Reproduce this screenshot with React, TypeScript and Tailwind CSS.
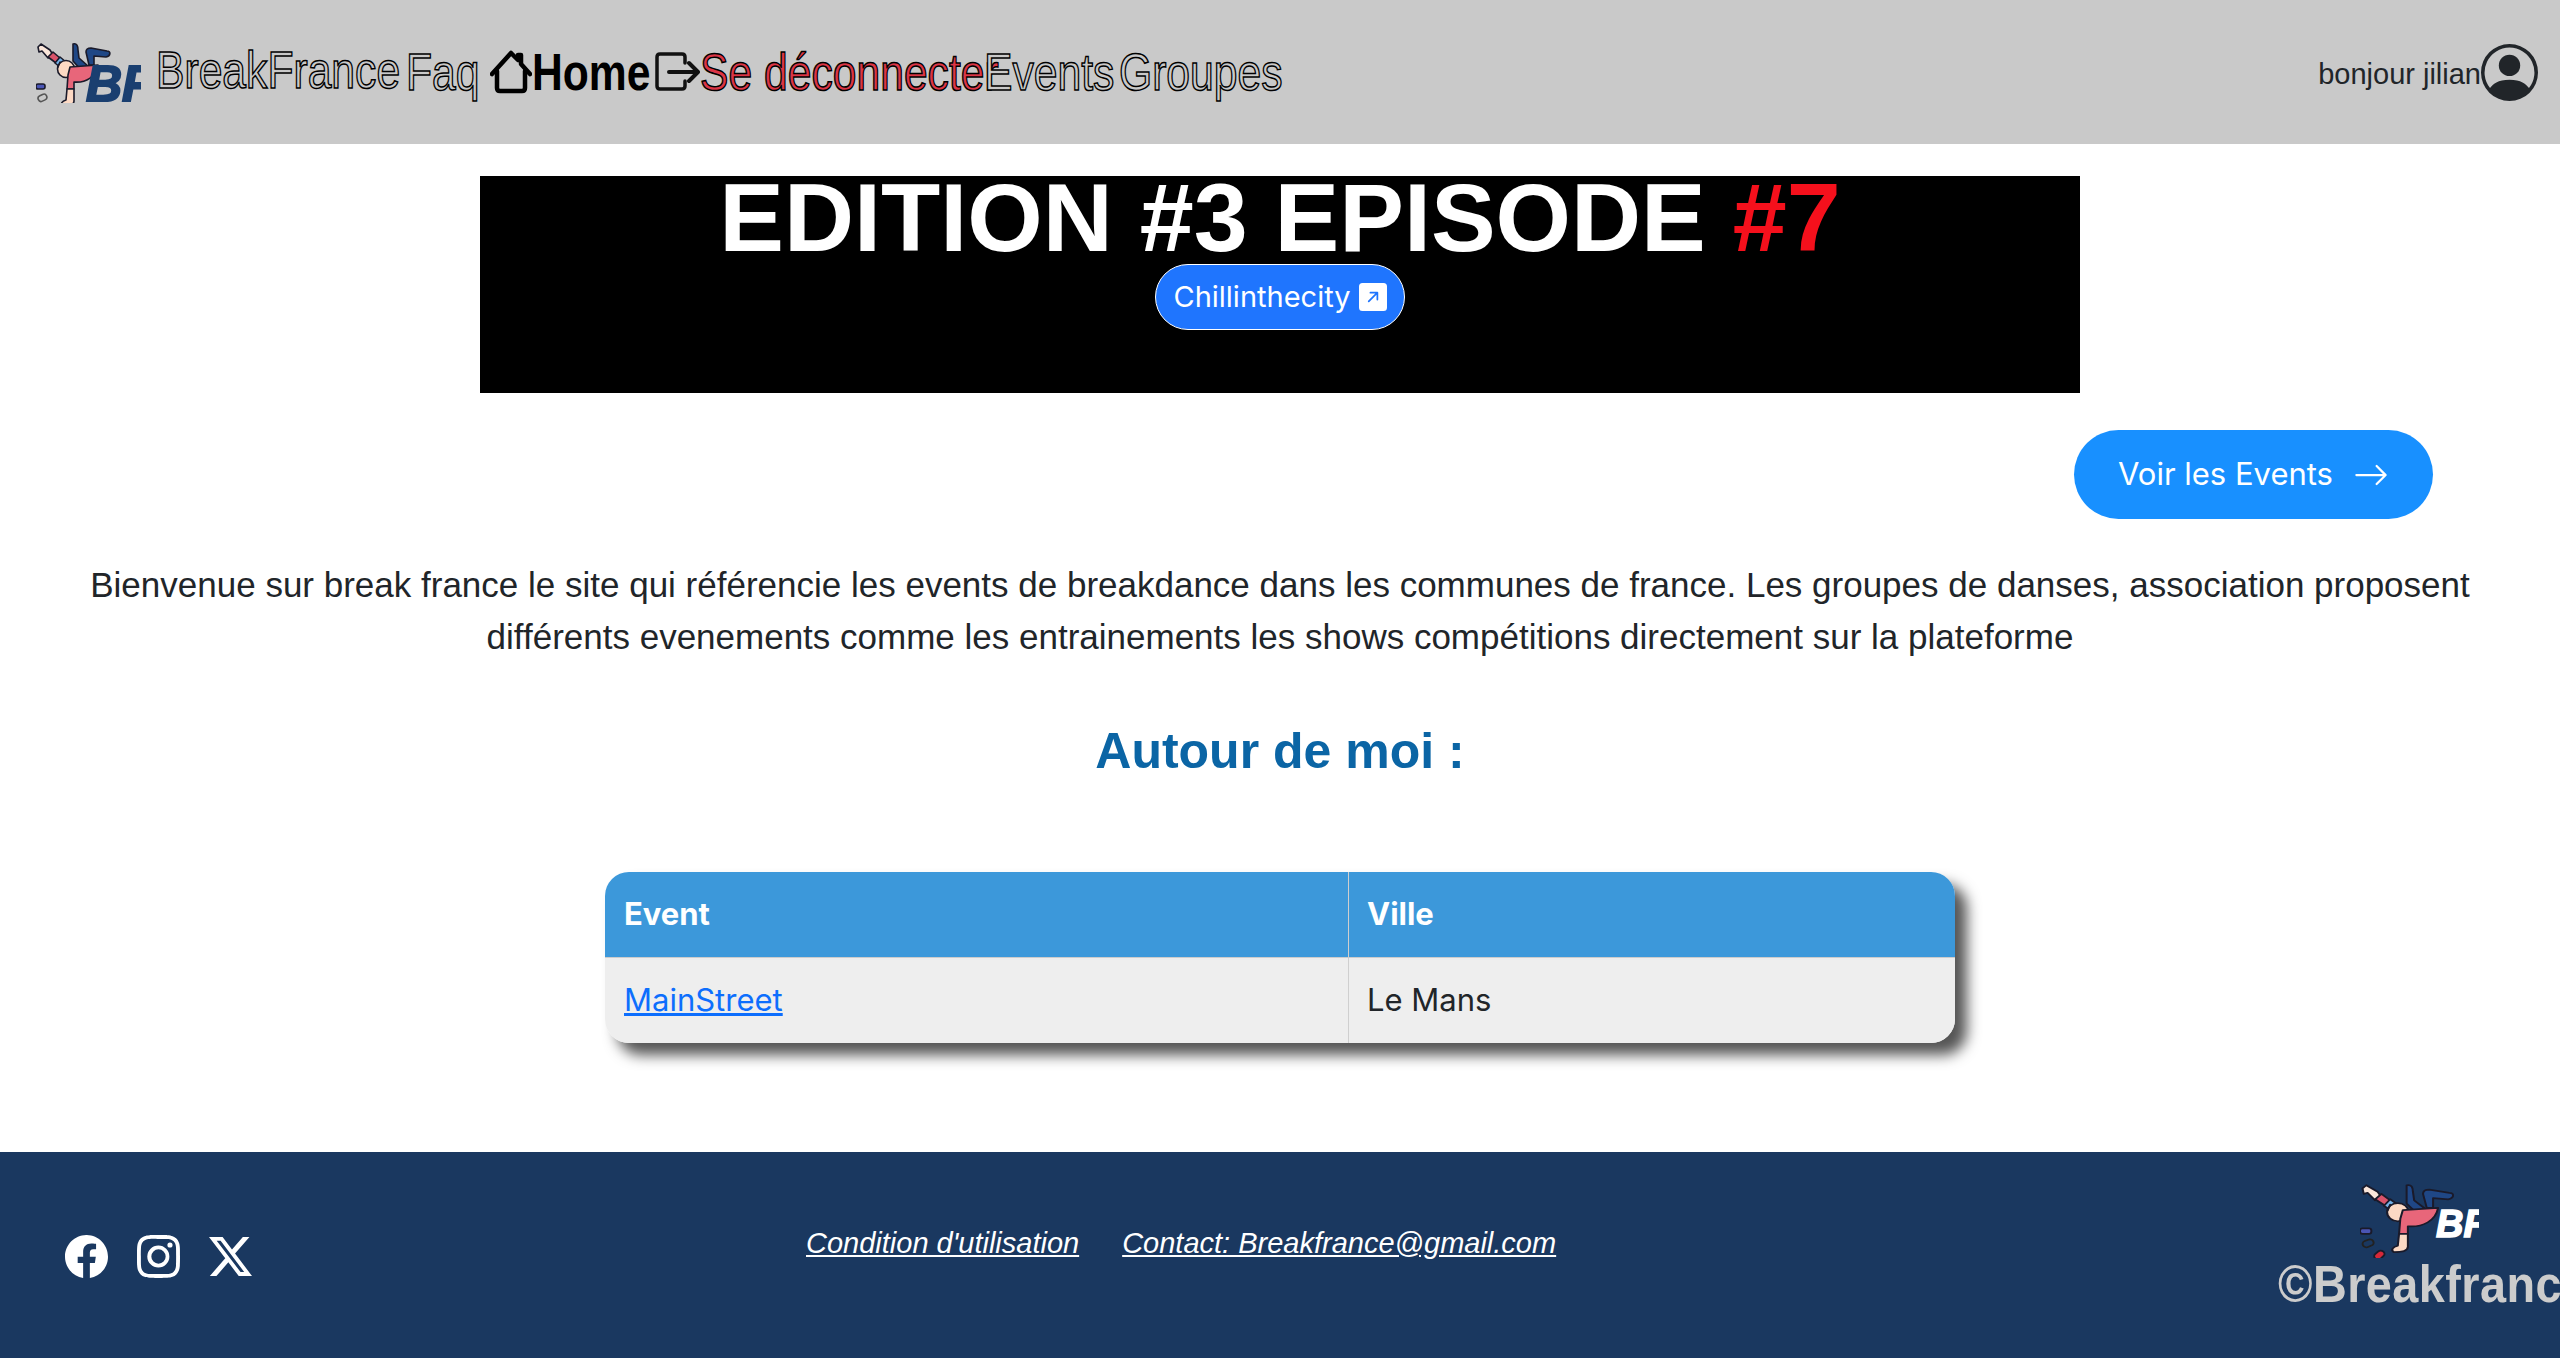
import React from 'react';
import { BsArrowRight, BsArrowUpRightSquareFill, BsFacebook, BsInstagram, BsPersonCircle, BsTwitterX } from 'react-icons/bs';

const narrow = "font-['Liberation_Sans_Narrow','Liberation_Sans',sans-serif]";
const outlined = '[-webkit-text-stroke:1.5px_#000] text-[#c9c9c9]';

// dancer figure, drawn in a 75x68 box
const Dancer = ({ pebble = '#222' }: { pebble?: string }) => (
  <g strokeLinejoin="round" strokeLinecap="round" stroke="#1a1a2a" strokeWidth="1.6">
    <path d="M2 6 L5 3 L14 9 L17 14 L12 17 L6 10 L3 11 Z" fill="#fbe6da" />
    <path d="M12 16 L17 11 L24 17 L20 22 Z" fill="#d9536a" />
    <path d="M19 22 L24 16 L30 21 L25 27 Z" fill="#72b0e6" />
    <circle cx="30" cy="28" r="8.5" fill="#fcd9c4" />
    <path d="M37 3 C41 2 42 5 42 9 L43 17 L52 25 L46 30 L37 20 Z" fill="#1f4786" />
    <path d="M50 11 L53 24 L58 24 L58 15 L70 16 C75 15 75 10 71 10 L55 7 C52 7 50 8 50 11 Z" fill="#1f4786" />
    <path d="M34 26 L62 24 C60 36 50 42 38 41 L38 48 L31 48 L32 34 Z" fill="#e8667a" />
    <path d="M31 48 L38 48 L38 60 C38 64 34 65 27 65 C24 63 26 60 30 59 Z" fill="#fcd9c4" />
    <path d="M24 21 L22 26" fill="none" />
    <rect x="0" y="43" width="9" height="5" rx="2" fill="#4a55b5" />
    <rect x="2" y="54" width="9" height="6" rx="3" fill="none" stroke={pebble} transform="rotate(-25 6 57)" />
    <rect x="11" y="65" width="9" height="6" rx="3" fill="#d62839" transform="rotate(-45 15 68)" />
  </g>
);

const Logo = ({ footer = false }: { footer?: boolean }) =>
  footer ? (
    <svg viewBox="0 0 119 76" className="w-[119px] h-[76px]">
      <g transform="scale(1.26 1.08)"><Dancer /></g>
      <text x="76" y="55" fontFamily="Liberation Sans" fontWeight="700" fontStyle="italic" fontSize="38" fill="#fff" stroke="#fff" strokeWidth="1.5">BF</text>
    </svg>
  ) : (
    <svg viewBox="0 0 105 62" className="w-[105px] h-[62px]">
      <Dancer pebble="#555" />
      <text x="50" y="60" fontFamily="Liberation Sans" fontWeight="700" fontStyle="italic" fontSize="50" fill="#1a3f70" stroke="#1a3f70" strokeWidth="2">BF</text>
    </svg>
  );

const HouseIcon = () => (
  <svg viewBox="0 0 42 44" className="w-[42px] h-[44px] shrink-0" fill="none" stroke="#000" strokeWidth="4.5" strokeLinejoin="round" strokeLinecap="round">
    <path d="M2 24 L21 3 L28 10 V5 H31 V14 L40 24" />
    <path d="M7 21 V38 C7 40 8 41 10 41 H32 C34 41 35 40 35 38 V21" />
  </svg>
);

const LogoutIcon = () => (
  <svg viewBox="0 0 45 44" className="w-[45px] h-[44px] shrink-0" fill="none" stroke="#111" strokeWidth="3.5" strokeLinejoin="round" strokeLinecap="round">
    <path d="M30 13 V7 C30 5 29 4 27 4 H5 C3 4 2 5 2 7 V36 C2 38 3 39 5 39 H27 C29 39 30 38 30 36 V31" />
    <path d="M14 22 H42 M34 13 L43 22 L34 31" strokeWidth="4" />
  </svg>
);

interface NavTextProps {
  width: number;
  className: string;
  children: React.ReactNode;
}

// the site's condensed font is not available, so the narrow face is squeezed to fit
const NavText = ({ className, children }: NavTextProps) => (
  <span className={`${narrow} text-[52px] leading-none whitespace-nowrap inline-block origin-left scale-x-[0.82] ${className}`}>
    {children}
  </span>
);

const Navbar = () => (
  <nav className="h-[144px] bg-[#c9c9c9] flex items-center pl-[36px] pr-[22px] shrink-0">
    <Logo />
    <div className="w-[204px] ml-[15px] -mt-[5px]"><NavText width={204} className={outlined}>BreakFrance</NavText></div>
    <div className="w-[53px] ml-[46px]"><NavText width={53} className={outlined}>Faq</NavText></div>
    <div className="flex items-center ml-[31px]">
      <HouseIcon />
      <div className="w-[94px]"><NavText width={94} className="font-bold text-black">Home</NavText></div>
    </div>
    <div className="flex items-center ml-[29px]">
      <LogoutIcon />
      <div className="w-[254px]"><NavText width={254} className="text-[#dc3545] [-webkit-text-stroke:1.5px_#000]">Se déconnecter</NavText></div>
    </div>
    <div className="w-[104px] ml-[30px]"><NavText width={104} className={outlined}>Events</NavText></div>
    <div className="w-[135px] ml-[31px]"><NavText width={135} className={outlined}>Groupes</NavText></div>
    <div className="ml-auto flex items-center text-[#212529]">
      <span className="font-['Liberation_Sans',sans-serif] text-[29px] mt-[6px]">bonjour jilian</span>
      <BsPersonCircle size={57} />
    </div>
  </nav>
);

const Banner = () => (
  <div className="mt-[32px] mx-auto w-[1600px] h-[217px] bg-black flex flex-col items-center overflow-hidden">
    <div className="font-['Liberation_Sans',sans-serif] font-bold text-[97px] leading-[92px] text-white whitespace-nowrap mt-[-4px]">
      EDITION #3 EPISODE <span className="text-[#f5101c]">#7</span>
    </div>
    <button className="mt-[0px] h-[66px] w-[250px] rounded-full border border-white bg-[#1f75fe] text-white flex items-center justify-center gap-[8px] font-['Inter',sans-serif] text-[29px]">
      Chillinthecity
      <BsArrowUpRightSquareFill size={28} />
    </button>
  </div>
);

const EventsTable = () => (
  <div className="w-[1350px] mx-auto mt-[91px] rounded-[24px] shadow-[12px_12px_14px_#555] overflow-hidden font-['Inter',sans-serif] text-[31px] text-[#212529]">
    <div className="grid grid-cols-[744px_1fr] h-[85px] bg-[#3c98da] text-white font-bold">
      <div className="flex items-center pl-[19px] border-r border-[#cfcfcf]">Event</div>
      <div className="flex items-center pl-[18px]">Ville</div>
    </div>
    <div className="grid grid-cols-[744px_1fr] h-[86px] bg-[#eeeeee] border-t border-[#cccccc]">
      <div className="flex items-center pl-[19px] border-r border-[#cfcfcf]">
        <a href="#" className="text-[#0d6efd] underline">MainStreet</a>
      </div>
      <div className="flex items-center pl-[18px]">Le Mans</div>
    </div>
  </div>
);

const Footer = () => (
  <footer className="mt-auto h-[206px] bg-[#1a3860] flex relative shrink-0">
    <div className="flex items-start gap-[29px] pl-[65px] pt-[83px] text-white">
      <BsFacebook size={43} />
      <BsInstagram size={43} />
      <BsTwitterX size={43} />
    </div>
    <div className="absolute left-[806px] top-[70px] flex gap-[43px] font-['Liberation_Sans',sans-serif] italic text-[29px] text-white">
      <a href="#" className="underline">Condition d'utilisation</a>
      <a href="#" className="underline">Contact: Breakfrance@gmail.com</a>
    </div>
    <div className="ml-auto mr-[52px] pt-[30px] flex flex-col">
      <div className="ml-[82px]"><Logo footer /></div>
      <span className={`${narrow} font-bold text-[52px] leading-[52px] tracking-[0.5px] text-[#cccccc] whitespace-nowrap inline-block origin-left scale-x-[0.9] w-[230px]`}>
        ©Breakfrance
      </span>
    </div>
  </footer>
);

export default function App() {
  return (
    <div className="min-h-[1358px] flex flex-col bg-white font-['Liberation_Sans',sans-serif]">
      <Navbar />
      <Banner />
      <div className="flex justify-end pr-[127px] mt-[37px]">
        <button className="h-[89px] w-[359px] rounded-full bg-[#1890ff] text-white flex items-center justify-center gap-[20px] font-['Inter',sans-serif] text-[31px]">
          Voir les Events
          <BsArrowRight size={36} />
        </button>
      </div>
      <p className="mt-[40px] px-[20px] text-center text-[35px] leading-[52px] text-[#212529]">
        Bienvenue sur break france le site qui référencie les events de breakdance dans les communes de france. Les groupes de danses, association proposent différents evenements comme les entrainements les shows compétitions directement sur la plateforme
      </p>
      <h2 className="mt-[58px] text-center font-bold text-[50px] leading-[60px] text-[#0b65a5]">Autour de moi :</h2>
      <EventsTable />
      <Footer />
    </div>
  );
}
